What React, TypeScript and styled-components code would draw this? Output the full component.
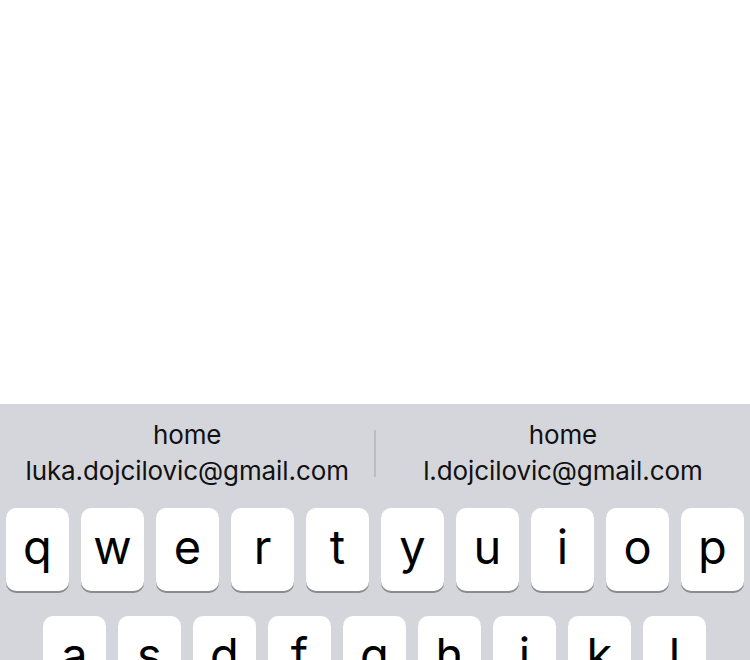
import React from "react";
import styled, { createGlobalStyle } from "styled-components";

const Global = createGlobalStyle`
  html, body { margin: 0; padding: 0; background: #ffffff; }
  body { font-family: Inter, "Noto Sans", "Liberation Sans", sans-serif; }
`;

const Screen = styled.div`
  width: 750px;
  height: 660px;
  overflow: hidden;
  display: flex;
  flex-direction: column;
  background: #ffffff;
`;

const Content = styled.div`
  height: 404px;
  flex: none;
  background: #ffffff;
`;

const Keyboard = styled.div`
  flex: 1;
  background: #d5d6dc;
  display: flex;
  flex-direction: column;
`;

const SuggestionBar = styled.div`
  height: 104px;
  box-sizing: border-box;
  padding-bottom: 6px;
  display: flex;
  align-items: center;
`;

const Suggestion = styled.div`
  flex: 1;
  display: flex;
  flex-direction: column;
  align-items: center;
  color: #111111;
  font-size: 26px;
  line-height: 36px;
  letter-spacing: -0.1px;
`;

const Divider = styled.div`
  width: 1.5px;
  height: 47px;
  background: #bcbdc3;
  flex: none;
`;

const Rows = styled.div`
  display: flex;
  flex-direction: column;
  gap: 25px;
`;

const Row = styled.div<{ $inset: number }>`
  display: flex;
  gap: 12px;
  padding-left: ${(p) => p.$inset}px;
`;

const Key = styled.div`
  width: 63px;
  height: 83px;
  flex: none;
  background: #ffffff;
  border-radius: 10px;
  box-shadow: 0 2px 0 #8a8b8f;
  display: flex;
  align-items: center;
  justify-content: center;
  color: #000000;
  font-size: 47px;
  font-weight: 400;
  line-height: 1;
  padding-bottom: 6px;
  box-sizing: border-box;
`;

const rows: { keys: string[]; inset: number }[] = [
  { keys: "qwertyuiop".split(""), inset: 6 },
  { keys: "asdfghjkl".split(""), inset: 43 },
];

export default function App() {
  return (
    <>
      <Global />
      <Screen>
        <Content />
        <Keyboard>
          <SuggestionBar>
            <Suggestion>
              <span>home</span>
              <span>luka.dojcilovic@gmail.com</span>
            </Suggestion>
            <Divider />
            <Suggestion>
              <span>home</span>
              <span>l.dojcilovic@gmail.com</span>
            </Suggestion>
          </SuggestionBar>
          <Rows>
            {rows.map((r, i) => (
              <Row key={i} $inset={r.inset}>
                {r.keys.map((k) => (
                  <Key key={k}>{k}</Key>
                ))}
              </Row>
            ))}
          </Rows>
        </Keyboard>
      </Screen>
    </>
  );
}
